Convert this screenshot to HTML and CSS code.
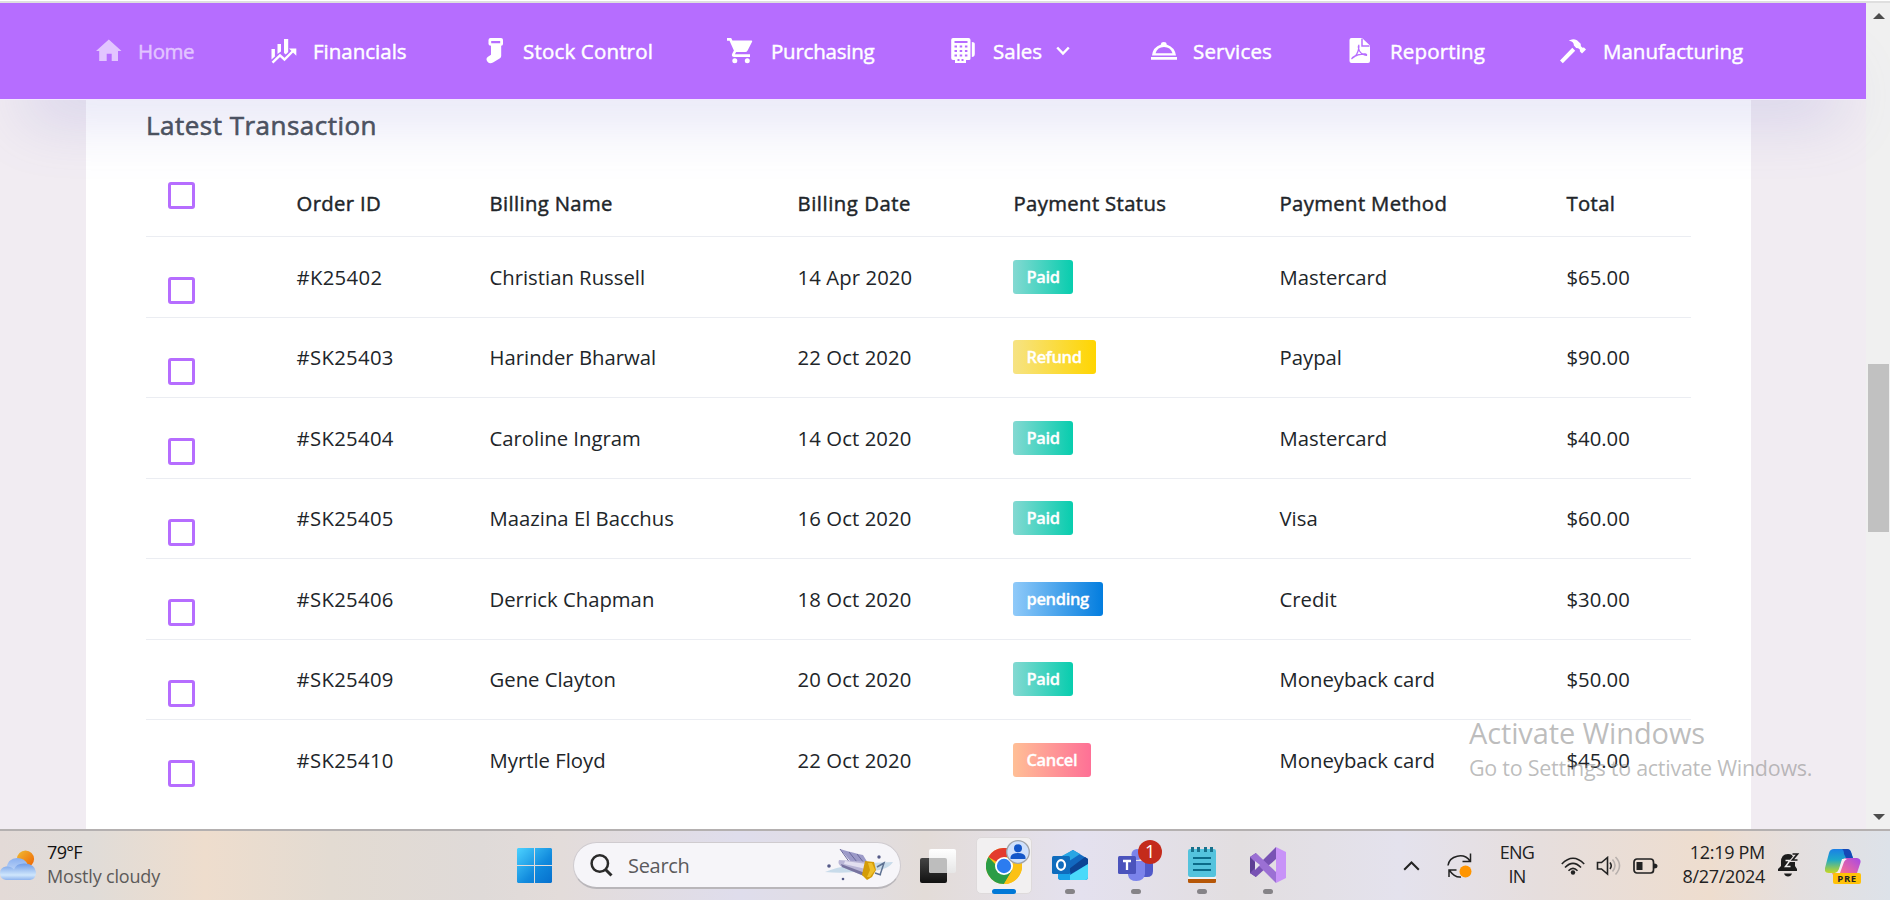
FILE: index.html
```html
<!DOCTYPE html>
<html lang="en">
<head>
<meta charset="utf-8">
<title>Latest Transaction</title>
<link rel="stylesheet" href="styles.css">
</head>
<body>
<div class="viewport">
  <div class="page">
    <nav class="nav">
      <a class="nav-item active"><svg viewBox="0 0 28 28"><path fill="currentColor" d="M13.8 2.4 26.5 14H23v10h-6.3v-7.300h-5V24H4.200V14H1z"/></svg><span class="n-home">Home</span></a>
      <a class="nav-item"><svg viewBox="0 0 28 28"><path fill="currentColor" d="M2.500 12h3.400v7.500l-3.400 3zM8.500 7h3.500v7.500L8.500 17zM15 2h4.200v13l-2.500 2.500-1.700-1.500z"/><path fill="none" stroke="currentColor" stroke-width="2.400" d="m3.500 25.700 7.500-7.400 4.500 4.200 8.500-8.500"/><path fill="currentColor" d="M20 11.500h7.300v7.200z"/></svg><span class="n-fin">Financials</span></a>
      <a class="nav-item"><svg viewBox="0 0 28 28"><path fill="currentColor" fill-rule="evenodd" d="M11.500 1h10.500q2 0 2 2v4q0 1.500-1.800 1.800V19q0 1.400-1.200 2.200l-7 4.400q-3.300 1.700-5.500-.9-2.300-3.200.5-5l3-2V8.800Q9.500 8.500 9.500 7V3q0-2 2-2zm.7 3v2.300h9V4z"/></svg><span class="n-stock">Stock Control</span></a>
      <a class="nav-item"><svg viewBox="0 0 28 28"><path fill="currentColor" d="M0 1h4.200l1.200 2.500h19.200q1 .2.500 1.300l-4.500 8.600q-.8 1.500-2.300 1.500H9.100l-1.200 2.300H23V20H7.200Q4 19.600 5.200 16.700l1.700-3.200L2.500 3.700H0z"/><circle cx="7.800" cy="23.700" r="2.500" fill="currentColor"/><circle cx="20.300" cy="23.700" r="2.500" fill="currentColor"/></svg><span class="n-pur">Purchasing</span></a>
      <a class="nav-item"><svg viewBox="0 0 28 28"><path fill="currentColor" fill-rule="evenodd" d="M4 1h15.500Q21.500 1 21.500 3v18.500q0 1.500-1.500 1.500h-3v3H6v-3H4Q2.200 23 2.200 21V3Q2.200 1 4 1zm1.500 3v2h13V4zm0 4.500v2H8v-2zm5.200 0v2h2.500v-2zm5.200 0v2h2.500v-2zM5.500 13v2H8v-2zm5.200 0v2h2.500v-2zm5.200 0v2h2.500v-2zM5.500 17.500v2H8v-2zm5.200 0v2h2.500v-2zm5.200 0v2h2.500v-2zM8.500 22v2h2v-2zm4 0v2h2v-2z"/><path fill="currentColor" d="M22.800 5q3 0 3 2v10q0 3-3 3z"/></svg><span class="n-sales">Sales</span><svg class="chev" viewBox="0 0 14 10"><path d="m1.200 1.500 5.800 6 5.800-6" fill="none" stroke="currentColor" stroke-width="2.500"/></svg></a>
      <a class="nav-item"><svg viewBox="0 0 28 28"><path fill="currentColor" fill-rule="evenodd" d="M2 20h26v2.700H2zM3 18.500Q3.800 10 12 7.400 12 5 14.800 5t2.800 2.400q8.200 2.600 9.400 11.100zm3.500-2.300h17q-2-6.200-8.500-6.200T6.500 16.200z"/></svg><span class="n-serv">Services</span></a>
      <a class="nav-item"><svg viewBox="0 0 28 28"><path fill="currentColor" d="M5.500 1H16l8 7.500V24q0 2-2 2H5.500q-2 0-2-2V3q0-2 2-2z"/><path d="M16 1.500V9h7.500" fill="none" stroke="#b66dff" stroke-width="1.500"/><path d="M6 21.500q5.500-2.500 6.800-10.500.2-2 0-2.500-1.200 1.300.7 5.500 2.500 4 7 4.300.5-.8-1.500-1.300-7-.2-12.500 3.500-1 1.500-.5 1z" fill="none" stroke="#b66dff" stroke-width="1.300"/></svg><span class="n-rep">Reporting</span></a>
      <a class="nav-item"><svg viewBox="0 0 28 28"><path fill="currentColor" d="m1 23.500 12.300-12.700 2.900 2.900L3.800 26.200zM9.800 3.800Q13.500.8 18 3.200l3.700 3.500.2 2.600 1.700 1.500 1.400-.2 2 2-4 3.900-2.200-2.200.2-1.500-1.800-1.600-2-.3-2.300-2.400Q15 4.500 9.800 3.800z"/></svg><span class="n-man">Manufacturing</span></a>
    </nav>
    <main class="card">
      <h1>Latest Transaction</h1>
      <div class="row head"><i class="box"></i><span>Order ID</span><span>Billing Name</span><span class="wide">Billing Date</span><span>Payment Status</span><span>Payment Method</span><span>Total</span></div>
      <div class="row"><i class="box"></i><span class="id">#K25402</span><span>Christian Russell</span><span class="date">14 Apr 2020</span><b class="badge paid">Paid</b><span>Mastercard</span><span>$65.00</span></div>
      <div class="row"><i class="box"></i><span class="id">#SK25403</span><span>Harinder Bharwal</span><span class="date">22 Oct 2020</span><b class="badge refund">Refund</b><span>Paypal</span><span>$90.00</span></div>
      <div class="row"><i class="box"></i><span class="id">#SK25404</span><span>Caroline Ingram</span><span class="date">14 Oct 2020</span><b class="badge paid">Paid</b><span>Mastercard</span><span>$40.00</span></div>
      <div class="row"><i class="box"></i><span class="id">#SK25405</span><span>Maazina El Bacchus</span><span class="date">16 Oct 2020</span><b class="badge paid">Paid</b><span>Visa</span><span>$60.00</span></div>
      <div class="row"><i class="box"></i><span class="id">#SK25406</span><span>Derrick Chapman</span><span class="date">18 Oct 2020</span><b class="badge pending">pending</b><span>Credit</span><span>$30.00</span></div>
      <div class="row"><i class="box"></i><span class="id">#SK25409</span><span>Gene Clayton</span><span class="date">20 Oct 2020</span><b class="badge paid">Paid</b><span>Moneyback card</span><span>$50.00</span></div>
      <div class="row last"><i class="box"></i><span class="id">#SK25410</span><span>Myrtle Floyd</span><span class="date">22 Oct 2020</span><b class="badge cancel">Cancel</b><span>Moneyback card</span><span>$45.00</span></div>
    </main>
  </div>
  <div class="scrollbar">
    <svg viewBox="0 0 12 6"><path d="M0 6 6 0l6 6z" fill="#4d4d4d"/></svg>
    <div class="thumb"></div>
    <svg viewBox="0 0 12 6"><path d="M0 0h12L6 6z" fill="#4d4d4d"/></svg>
  </div>
</div>
<div class="watermark"><p class="wm-big">Activate Windows</p><p class="wm-small">Go to Settings to activate Windows.</p></div>

<footer class="taskbar">
  <svg class="weather" viewBox="0 0 36 31" width="36" height="31">
    <defs>
      <linearGradient id="sun" x1="0" y1="0" x2="1" y2="1"><stop offset="0" stop-color="#efbd35"/><stop offset="1" stop-color="#f06000"/></linearGradient>
      <linearGradient id="cl1" x1="0" y1="0" x2="0" y2="1"><stop offset="0" stop-color="#8ab0f0"/><stop offset="1" stop-color="#d5e6fb"/></linearGradient>
      <linearGradient id="cl2" x1="0" y1="0" x2="0" y2="1"><stop offset="0" stop-color="#6f9be6"/><stop offset=".7" stop-color="#cfe6fc"/><stop offset="1" stop-color="#8fb4ee"/></linearGradient>
    </defs>
    <circle cx="25.500" cy="9" r="8.600" fill="url(#sun)"/>
    <path d="M6 19Q8 8 17 8q8 0 11 7l-3 12H5z" fill="url(#cl1)"/>
    <path d="M6 30q-6-1-6-7 0-5.500 6-6.500 5-.5 8 3 2-6.500 11-6 10 .5 11 8.500 0 7-6 8z" fill="url(#cl2)"/>
  </svg>
  <div class="weather-text"><span class="deg">79°F</span><span class="cloudy">Mostly cloudy</span></div>
  <svg class="start" viewBox="0 0 35 35" width="35" height="35"><defs><linearGradient id="win" x1="0" y1="0" x2="1" y2="1"><stop offset="0" stop-color="#4cd2ff"/><stop offset=".6" stop-color="#118add"/><stop offset="1" stop-color="#0670ce"/></linearGradient></defs><path fill="url(#win)" d="M1 0h16v17H0V1zM18 0h16l1 1v16H18zM0 18h17v17H1l-1-1zM18 18h17v16l-1 1H18z"/></svg>
  <div class="search">
    <svg class="mag" viewBox="0 0 23 23" width="23" height="23"><circle cx="9.800" cy="9.500" r="8.200" fill="none" stroke="#2a2a2a" stroke-width="2.500"/><path d="m15.500 15.500 6 6" stroke="#2a2a2a" stroke-width="3"/></svg>
    <span>Search</span>
    <svg class="art" viewBox="0 0 70 34" width="70" height="34">
      <path d="M0 24q20-9 68-10-6 10-30 9-20 3-38 1z" fill="#bdd5e6" opacity=".8"/>
      <path d="M15 1q14 4 23 6l8 13-20-6z" fill="#9c9ac8"/><path d="m15 1 10 14M24 4l8 10M32 6l7 9" stroke="#6b699c" stroke-width="1"/>
      <path d="m14 12 30 2-5 14-22-9q-5-3-3-7z" fill="#b9b5d6"/><path d="m20 13 22 3-1 5-22-5z" fill="#e2dff0"/><path d="m17 19 22 9 1-3-24-9z" fill="#77739f"/>
      <path d="m40 13 9 1 2 8-4 7-5 3-5-5z" fill="#d49c08"/><path d="m43 15 4 0 3 7-5 7h-3l3-7z" fill="#f0c02c"/>
      <path d="m52 19 7-4-4 12M50 25l6 2" stroke="#5e7192" stroke-width="1.500" fill="none"/>
      <circle cx="4" cy="18" r="1.800" fill="#555a88"/><circle cx="54" cy="9" r="1.700" fill="#555a88"/><circle cx="18" cy="31" r="1.300" fill="#555a88"/>
    </svg>
  </div>
  <svg class="taskview" viewBox="0 0 36 34" width="36" height="34"><defs><linearGradient id="tv" x1="0" y1="0" x2="0" y2="1"><stop offset="0" stop-color="#444"/><stop offset="1" stop-color="#111"/></linearGradient><linearGradient id="tw" x1="0" y1="0" x2="0" y2="1"><stop offset="0" stop-color="#fff"/><stop offset="1" stop-color="#e6e6e6"/></linearGradient></defs><rect y="9" width="27" height="25" rx="2" fill="url(#tv)"/><rect x="9" y="0" width="27" height="24" rx="2" fill="url(#tw)"/><path d="M9 9h16q2 0 2 2v13H11q-2 0-2-2z" fill="#bdbdbd"/></svg>
  <div class="apps">
    <div class="app"><div class="tile"><svg viewBox="0 0 36 36" width="36" height="36"><circle cx="18" cy="18" r="18" fill="#fbc116"/><path d="M18 18 2.400 9A18 18 0 0 1 33.600 9z" fill="#e33b2e"/><path d="M18 18h-7L2.400 9A18 18 0 0 0 18 36l8-13.500z" fill="#2b9d47"/><path d="M18 9h15.600A18 18 0 0 1 18 36l8-13.500z" fill="#fbc116"/><circle cx="18" cy="18" r="9" fill="#fff"/><circle cx="18" cy="18" r="7.200" fill="#2c7cf0"/></svg></div><svg class="bubble" viewBox="0 0 24 24"><circle cx="12" cy="12" r="11.300" fill="#cfe0fb" stroke="#a0a4aa" stroke-width="1.300"/><circle cx="12" cy="8.300" r="4" fill="#1256c9"/><path d="M4.500 19v-2q1-4 7.500-4t7.500 4v2z" fill="#1256c9"/></svg><i class="dash on"></i></div>
    <div class="app"><svg viewBox="0 0 36 36" width="36" height="36"><path d="M6 12 21 3l15 9v18q0 3-3 3H9q-3 0-3-3z" fill="#1269c0"/><path d="m6 11 15-8 7 4-20 13z" fill="#28a6e4"/><path d="m17 22 16-12 3 2v5L19 27z" fill="#0c4494"/><path d="M36 17 18 28v5h15q3 0 3-3z" fill="#4adafa"/><path d="M6 24h12v9H9q-3 0-3-3z" fill="#18a2e8"/><rect y="9" width="18" height="18" rx="1.500" fill="#0f6cbd"/><ellipse cx="9" cy="18" rx="4" ry="4.800" fill="none" stroke="#fff" stroke-width="2.200"/></svg><i class="dash"></i></div>
    <div class="app"><svg viewBox="0 0 36 36" width="36" height="36"><circle cx="29" cy="10" r="4" fill="#5059c9"/><path d="M23 14h12v10q0 6-6 6h-6z" fill="#5059c9"/><circle cx="19" cy="7.500" r="5.500" fill="#7b83eb"/><path d="M10 14h17v13q-1 7-8.500 7T10 28z" fill="#7b83eb"/><rect y="9" width="18" height="18" rx="1.500" fill="#4b53bc"/><path d="M5 14h8M9 14v9" stroke="#fff" stroke-width="2.300"/></svg><span class="bubble count">1</span><i class="dash"></i></div>
    <div class="app"><svg viewBox="0 0 36 36" width="36" height="36"><rect x="4" y="27" width="28" height="9" rx="1.500" fill="#b65708"/><path d="M4 28h28v4H4z" fill="#f2f2f2"/><rect x="4" y="2" width="28" height="28" rx="2" fill="#54c3dd"/><path d="M9 11h18M9 17h18M9 23h18" stroke="#0b6b89" stroke-width="2"/><path d="M8.500 0v5M14.500 0v5M21.500 0v5M27.500 0v5" stroke="#17718c" stroke-width="3"/></svg><i class="dash"></i></div>
    <div class="app"><svg viewBox="0 0 36 36" width="36" height="36"><path d="m0 10 6-4v24l-6-4z" fill="#5d3f94"/><path d="M26 0v12L6 30l-6-4z" fill="#7852b4"/><path d="m0 10 6-4 20 19v11z" fill="#9b70d4"/><path d="m26 0 10 5v26l-10 5z" fill="#c893f8"/><path d="m5 14 5 4-5 5z" fill="#e5e1ec"/></svg><i class="dash"></i></div>
  </div>
  <svg class="up" viewBox="0 0 17 10" width="17" height="10"><path d="m1.200 8.800 7.300-7.300 7.300 7.300" fill="none" stroke="#222" stroke-width="2"/></svg>
  <svg class="sync" viewBox="0 0 26 26" width="26" height="26"><path d="M1 12.500A12 11 0 0 1 23 8M23.500.500v8h-8M2 24v-7h7.500M2.500 17.500Q8 25 14 24" fill="none" stroke="#222" stroke-width="1.500"/><circle cx="18.500" cy="18.500" r="6" fill="#ff9500"/></svg>
  <div class="lang"><span>ENG</span><span>IN</span></div>
  <svg class="wifi" viewBox="0 0 24 18" width="24" height="18"><path d="M.8 7q11.200-11.500 22.400 0M4 10.500q8-8.200 16 0M7.500 13.700q4.500-4.500 9 0" fill="none" stroke="#222" stroke-width="1.600"/><circle cx="12" cy="15.500" r="2.200" fill="#222"/></svg>
  <svg class="vol" viewBox="0 0 26 20" width="26" height="20"><path d="M1.500 6.500h4L11.500 1.500v16.500l-6-5h-4zM14 6.500q2.500 3.300 0 6.500" fill="none" stroke="#222" stroke-width="1.600"/><path d="M16.500 3.500q5 6 0 12M19.500 1q8 8.500 0 17.500" fill="none" stroke="#b7b0ad" stroke-width="1.600"/></svg>
  <svg class="bat" viewBox="0 0 25 16" width="25" height="16"><rect x="1" y="1" width="19.500" height="14" rx="3" fill="none" stroke="#222" stroke-width="1.700"/><rect x="3.500" y="4" width="6" height="8" fill="#222"/><path d="M21 5.500q3.500 0 3.500 2.500T21 10.500z" fill="#222"/></svg>
  <div class="clock"><span>12:19 PM</span><span>8/27/2024</span></div>
  <svg class="bell" viewBox="0 0 22 24" width="22" height="24"><path d="M3 9q0-8 7-8 2.500 0 4 1l3 5v6l2 3v2H0v-2l3-3zM6 20.500h8q-1 3-4 3t-4-3z" fill="#1c1c1c"/><path d="M7.500 7.500h4.500l-4.500 6h5" fill="none" stroke="#eee" stroke-width="1.500"/><path d="M14.500 1h5l-5 6h5" fill="none" stroke="#e5dfdf" stroke-width="4"/><path d="M14.500 1h5l-5 6h5" fill="none" stroke="#1c1c1c" stroke-width="1.700"/></svg>
  <div class="copilot"><svg viewBox="0 0 36 34" width="36" height="34"><defs><linearGradient id="ca" x1="0" y1="0" x2="0" y2="1"><stop offset="0" stop-color="#1b7fe6"/><stop offset=".45" stop-color="#1ea9c8"/><stop offset="1" stop-color="#c8d821"/></linearGradient><linearGradient id="cb" x1="1" y1="0" x2="0" y2="1"><stop offset="0" stop-color="#a648e6"/><stop offset=".6" stop-color="#f06a9c"/><stop offset="1" stop-color="#ffae4a"/></linearGradient></defs><path d="M9 0h13q3 0 4 3l2 6h-7q-3 0-4 3l-3 9q-1 3-4 3H4q-5 0-4-5L4 4q1-4 5-4z" fill="url(#ca)"/><path d="M17 0h5q3 0 4 3l2 6h-7l-2-4q0-4-2-5z" fill="#1648b6"/><path d="M27 9h5q5 1 3 6l-4 12q-1 4-5 4H13q-3 0-4-3l-2-4h4q2 0 3-3l4-9q1-3 4-3z" fill="url(#cb)"/><path d="M17 10h5q-2 1-3 3l-4 11h-5q3-1 4-4z" fill="#f7ebf3"/></svg><span class="pre">PRE</span></div>
</footer>
</body>
</html>
```
FILE: styles.css
```css
* { box-sizing: border-box; }
body {
  margin: 0;
  width: 1890px;
  height: 900px;
  overflow: hidden;
  position: relative;
  font-family: "Open Sans", "Noto Sans", sans-serif;
  color: #212529;
  white-space: nowrap;
}
svg { display: block; flex: none; }

.viewport {
  height: 829px;
  display: flex;
  border-top: 1px solid #fff;
}
.page {
  width: 1866px;
  background: #f1ecf2;
  border-top: 2px solid #dfdfdf;
}

/* top navigation */
.nav {
  height: 97px;
  position: relative;
  z-index: 1;
  padding-left: 95px;
  display: grid;
  grid-template-columns: 174px 210px 248px 222px 200px 197px 213px 190px;
  align-items: center;
  background: #b66dff;
  border-bottom: 1px solid #f3e8ff;
  box-shadow: 0 44px 60px -25px rgba(115, 110, 205, 0.22);
  font-size: 20.5px;
  font-weight: 500;
  color: #fff;
}
.nav-item { display: flex; align-items: center; gap: 16px; }
.nav-item span { -webkit-text-stroke: 0.45px currentColor; }
.nav-item svg { width: 28px; height: 28px; }
.nav-item .chev { width: 14px; height: 10px; margin-left: -2px; }
.active { color: #e2c5ff; }
.nav-item .n-home { letter-spacing: -0.45px; margin-left: -1px; }
.n-stock, .n-serv, .n-rep { letter-spacing: 0.17px; }
.n-pur { letter-spacing: -0.22px; }

/* transaction card */
.card {
  width: 1665px;
  height: 729px;
  margin-left: 86px;
  padding: 0 60px;
  background: #fff;
}
h1 {
  margin: 0;
  height: 70px;
  padding-top: 5px;
  font-size: 26px;
  line-height: 40px;
  font-weight: 500;
  letter-spacing: 0.48px;
  color: #495057;
  -webkit-text-stroke: 0.6px currentColor;
}
.row {
  height: 80.5px;
  display: grid;
  grid-template-columns: 150px 193px 308px 216px 266px 287px 125px;
  align-items: center;
  border-bottom: 1px solid #ebedf2;
  font-size: 20.3px;
}
.row > span { padding-left: 0.5px; }
.row.last { border-bottom: 0; }
.row.head { height: 67px; font-weight: 500; letter-spacing: 0.36px; -webkit-text-stroke: 0.45px currentColor; }
.row .wide { letter-spacing: 0.55px; }
.id { letter-spacing: 0.33px; }
.date { letter-spacing: 0.1px; }
.box {
  width: 27px;
  height: 27px;
  margin: 40px 0 0 22px;
  align-self: start;
  border: 3px solid #b66dff;
  border-radius: 3px;
}
.head .box { margin-top: 12px; }
.badge {
  justify-self: start;
  height: 34px;
  padding: 0 13.5px;
  border-radius: 3px;
  font-size: 16.5px;
  line-height: 34px;
  font-weight: 600;
  letter-spacing: -0.35px;
  color: #fff;
  -webkit-text-stroke: 0.3px currentColor;
}
.paid { width: 60px; background: linear-gradient(90deg, #84d9d2, #07cdae); }
.refund { width: 83px; background: linear-gradient(90deg, #f6e384, #ffd500); }
.pending { width: 90px; background: linear-gradient(90deg, #90caf9, #047edf 99%); }
.cancel { width: 78px; background: linear-gradient(90deg, #ffbf96, #fe7096); }

/* browser scrollbar */
.scrollbar {
  width: 24px;
  padding: 10px 1px 9px 2px;
  display: flex;
  flex-direction: column;
  align-items: center;
  background: #f0f0f0;
  border-top: 2px solid #dfdfdf;
}
.scrollbar svg { width: 12px; height: 6px; }
.thumb { width: 21px; height: 168px; margin: 345px 0 auto; background: #c1c1c1; }

.watermark { position: absolute; z-index: 2; left: 1469px; top: 713px; color: rgba(145, 145, 145, 0.6); }
.watermark p { margin: 0; }
.wm-big { font-size: 29px; line-height: 40px; letter-spacing: -0.13px; }
.wm-small { font-size: 21.5px; line-height: 30px; letter-spacing: -0.26px; }

/* desktop taskbar */
.taskbar {
  height: 71px;
  display: flex;
  align-items: center;
  border-top: 2px solid #b4b0b0;
  background: linear-gradient(90deg, #e3dad7 0, #e0dcd8 90px, #eeddcd 205px, #e3dbd2 330px, #dfdad8 480px, #e3dcda 560px, #dfddec 740px, #e1dde1 860px, #e3dcd8 925px, #e4e1ef 1080px, #e2dee0 1240px, #e4e2ed 1400px, #e6dedd 1540px, #eeddce 1710px, #e4dfdf 1800px, #dde2e9 1890px);
  font-size: 18px;
  letter-spacing: -0.3px;
  color: #222;
}
.weather-text, .lang, .clock { display: flex; flex-direction: column; line-height: 24px; margin-bottom: 3px; }
.weather-text { width: 470px; margin-left: 11px; }
.deg { letter-spacing: -0.65px; color: #111; }
.cloudy { letter-spacing: -0.18px; color: #5c5a59; }
.search {
  width: 328px;
  height: 47px;
  margin-left: 21px;
  padding-left: 16px;
  display: flex;
  align-items: center;
  background: #f6f5f9;
  border: 1px solid #cfcbcf;
  border-bottom: 2px solid #b9b6ba;
  border-radius: 24px;
  font-size: 20px;
  color: #5b5a5c;
}
.search span { width: 197px; margin-left: 15px; }
.taskview { margin-left: 19px; }
.apps { display: flex; margin-left: 15px; }
.app { position: relative; width: 66px; height: 69px; display: flex; align-items: center; justify-content: center; }
.app > svg:first-child { margin-bottom: 1px; }
.tile {
  width: 56px;
  height: 57px;
  display: flex;
  align-items: center;
  justify-content: center;
  background: #f2f0f1;
  border: 1px solid #dedadb;
  border-radius: 5px;
}
.bubble { position: absolute; left: 35px; top: 9px; width: 24px; height: 24px; }
.count { background: #c42b1c; border-radius: 50%; color: #fff; text-align: center; line-height: 23px; }
.dash { position: absolute; left: 28px; top: 58px; width: 10px; height: 5px; border-radius: 3px; background: #858387; }
.dash.on { left: 21px; width: 24px; background: #0078d7; }
.up { margin-left: 102px; }
.sync { margin-left: 27px; }
.lang { width: 36px; margin-left: 26px; align-items: center; letter-spacing: -0.7px; }
.wifi { margin-left: 26px; }
.vol { margin-left: 11px; }
.bat { margin-left: 11px; }
.clock { width: 84px; margin-left: 23px; align-items: flex-end; }
.bell { margin-left: 13px; margin-bottom: 2px; }
.copilot { position: relative; margin-left: 25px; }
.pre {
  position: absolute;
  left: 8px;
  top: 24px;
  width: 28px;
  height: 11px;
  background: #ffc208;
  border-radius: 2px;
  text-align: center;
  font-size: 9.5px;
  line-height: 11px;
  font-weight: 700;
  letter-spacing: 0.6px;
}
```
